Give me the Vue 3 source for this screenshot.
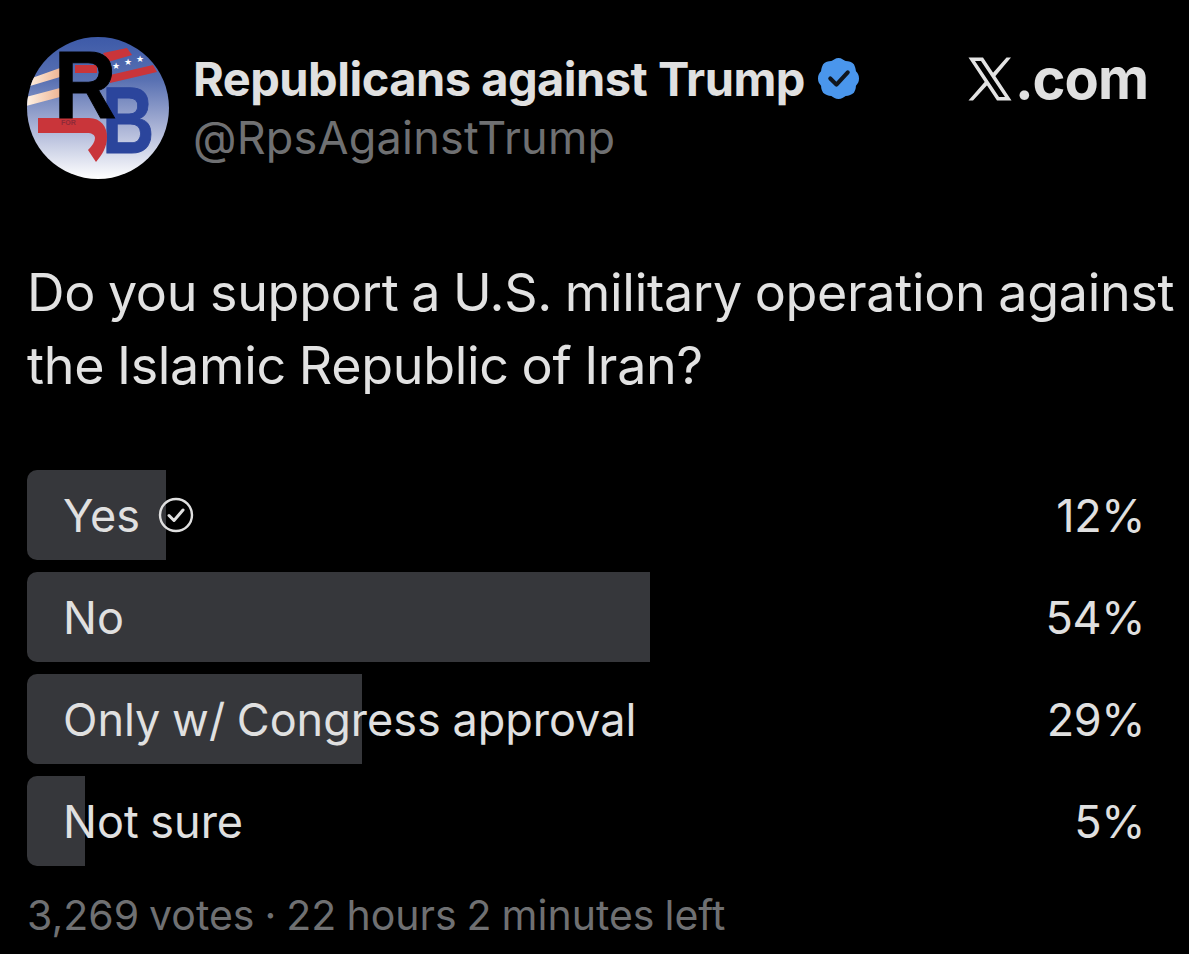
<script setup>
const options = [
  { label: 'Yes', pct: 12, width: 139, chosen: true },
  { label: 'No', pct: 54, width: 623 },
  { label: 'Only w/ Congress approval', pct: 29, width: 335 },
  { label: 'Not sure', pct: 5, width: 58 },
]
</script>

<template>
  <main class="page">
    <header class="head">
      <svg class="avatar" viewBox="0 0 142 142" aria-label="RB logo">
        <defs>
          <linearGradient id="sky" x1="0" y1="0" x2="0" y2="1">
            <stop offset="0" stop-color="#3d5aa8" />
            <stop offset="0.3" stop-color="#5870b2" />
            <stop offset="0.62" stop-color="#a6b0d4" />
            <stop offset="1" stop-color="#ffffff" />
          </linearGradient>
          <linearGradient id="peach" x1="0" y1="0" x2="1" y2="0">
            <stop offset="0" stop-color="#fff3e6" />
            <stop offset="1" stop-color="#eeb594" />
          </linearGradient>
          <clipPath id="disc"><circle cx="71" cy="71" r="71" /></clipPath>
        </defs>
        <g clip-path="url(#disc)">
          <rect width="142" height="142" fill="url(#sky)" />
          <path d="M5 41 L33 31 V40 L3 49 Z M-1 60 L33 51 V60 L-1 69 Z" fill="url(#peach)" />
          <path d="M76 16 L100 11 L105 18 L81 25 Z M48 28 H70 V36 H48 Z M83 38 L126 28 L130 35 L83 46 Z" fill="#c9353a" />
          <g fill="#fff" font-family="'DejaVu Sans', sans-serif" font-size="9" text-anchor="middle">
            <text x="89" y="32">★</text>
            <text x="101" y="28">★</text>
            <text x="113" y="25">★</text>
          </g>
          <text class="logo-b" transform="translate(75 116) scale(0.77 1)">B</text>
          <path d="M11 81 H62 C74 81 80 90 80 100 C80 110 75 118 69 125 L61 113 C65 109 68 105 68 101 C68 98 65 96 60 96 H11 Z" fill="#c9353a" />
          <text class="logo-r" transform="translate(27 81) scale(0.9 1)">R</text>
          <text x="34" y="88" class="logo-for">FOR</text>
        </g>
      </svg>
      <div class="who">
        <div class="name-row">
          <span class="name">Republicans against Trump</span>
          <svg class="badge" viewBox="0 0 40 40" aria-hidden="true">
            <path d="M20 0 C23 0 25 2 27 3 C30 3 33 4 35 6 C36 8 37 11 37 13 C39 15 40 17 40 20 C40 23 39 25 37 27 C37 30 36 32 35 34 C33 36 30 37 27 37 C25 38 23 40 20 40 C17 40 15 38 13 37 C10 37 7 36 5 34 C4 32 3 30 3 27 C1 25 0 23 0 20 C0 17 1 15 3 13 C3 11 4 8 5 6 C7 4 10 3 13 3 C15 2 17 0 20 0 Z" fill="#4a96ec" />
            <path d="M12 20 L18 26 L29 14" fill="none" stroke="#10151c" stroke-width="4" stroke-linecap="round" stroke-linejoin="round" />
          </svg>
        </div>
        <div class="handle">@RpsAgainstTrump</div>
      </div>
      <div class="brand">
        <svg class="x-mark" viewBox="0 0 44 44" aria-label="X">
          <path d="M0.5 0.5 H15 L43.5 43.5 H29 Z M7 4 L31 40 H37 L13 4 Z" fill="#e3e3e3" fill-rule="evenodd" />
          <path d="M38.5 0.5 L23.5 17.5 L25.8 21 L43 0.5 Z M17.5 24 L0.5 43.5 H5 L19.8 27.5 Z" fill="#e3e3e3" />
        </svg>
        <span class="dotcom">.com</span>
      </div>
    </header>

    <p class="question">Do you support a U.S. military operation against the Islamic Republic of Iran?</p>

    <ul class="options">
      <li v-for="o in options" :key="o.label" class="option">
        <div class="fill" :style="{ width: o.width + 'px' }"></div>
        <span class="label">{{ o.label }}</span>
        <svg v-if="o.chosen" class="tick" viewBox="0 0 36 36" aria-hidden="true">
          <circle cx="18" cy="18" r="16" fill="none" stroke="#e0e0e0" stroke-width="2.4" />
          <path d="M11 18.5 L16 23.5 L25 13" fill="none" stroke="#e0e0e0" stroke-width="3" stroke-linecap="round" stroke-linejoin="round" />
        </svg>
        <span class="pct">{{ o.pct }}%</span>
      </li>
    </ul>

    <p class="meta">3,269 votes · 22 hours 2 minutes left</p>
  </main>
</template>

<style scoped>
.page {
  box-sizing: border-box;
  height: 954px;
  width: 1189px;
  padding: 37px 0 0 27px;
  background: #000;
  color: #e0e0e0;
  font-family: Inter, "Liberation Sans", sans-serif;
  overflow: hidden;
}
.head {
  display: flex;
  align-items: flex-start;
  height: 142px;
  width: 1121px;
}
.avatar {
  width: 142px;
  height: 142px;
  flex: none;
}
.who {
  margin-left: 24px;
  padding-top: 11px;
}
.name-row {
  display: flex;
  align-items: center;
  gap: 13px;
  height: 60px;
}
.name {
  font-size: 47px;
  font-weight: 700;
  letter-spacing: -0.52px;
  white-space: nowrap;
}
.badge {
  width: 41px;
  height: 41px;
  flex: none;
}
.handle {
  font-size: 45px;
  line-height: 60px;
  color: #6f7072;
  letter-spacing: 0.2px;
}
.brand {
  margin-left: auto;
  padding-top: 17px;
  display: flex;
  align-items: center;
  height: 50px;
}
.x-mark {
  width: 44px;
  height: 44px;
  flex: none;
  margin-right: 3px;
}
.dotcom {
  font-size: 56px;
  font-weight: 700;
  letter-spacing: -1px;
}
.question {
  margin: 77px 0 0;
  width: 1155px;
  font-size: 52px;
  line-height: 73px;
  letter-spacing: -0.3px;
  word-spacing: -1.5px;
  color: #e2e2e2;
}
.options {
  list-style: none;
  margin: 68px 0 0;
  padding: 0;
  display: flex;
  flex-direction: column;
  gap: 12px;
  width: 1118px;
}
.option {
  position: relative;
  display: flex;
  align-items: center;
  height: 90px;
  padding-left: 36px;
  font-size: 45px;
}
.fill {
  position: absolute;
  left: 0;
  top: 0;
  bottom: 0;
  background: #36373b;
  border-radius: 10px 0 0 10px;
}
.label, .pct, .tick {
  position: relative;
}
.label {
  letter-spacing: 0;
  word-spacing: -1px;
}
.tick {
  width: 36px;
  height: 36px;
  margin-left: 18px;
}
.pct {
  margin-left: auto;
  letter-spacing: -0.4px;
}
.meta {
  margin: 24px 0 0;
  font-size: 41px;
  line-height: 50px;
  color: #6f7072;
  letter-spacing: 0;
  word-spacing: -1.5px;
}
.logo-r {
  font: 700 96px "Liberation Sans", sans-serif;
  fill: #000;
  stroke: #000;
  stroke-width: 1;
}
.logo-b {
  font: 700 94px "Liberation Sans", sans-serif;
  fill: #2b459c;
  stroke: #2b459c;
  stroke-width: 1;
}
.logo-for {
  font: 700 7px "Liberation Sans", sans-serif;
  fill: #8f2a38;
}
</style>
